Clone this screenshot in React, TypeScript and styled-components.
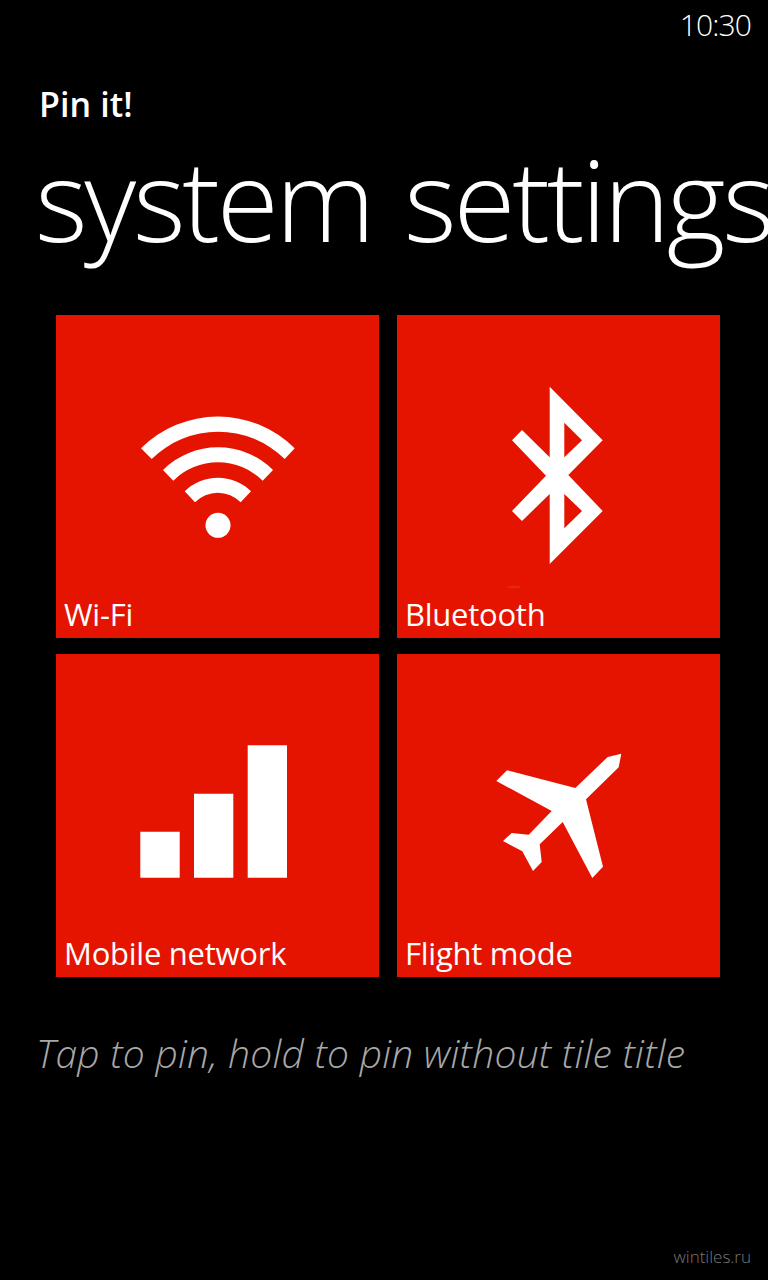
import React from "react";
import styled, { createGlobalStyle } from "styled-components";

const Global = createGlobalStyle`
  html, body { margin: 0; padding: 0; background: #000; }
  #root { width: 768px; height: 1280px; overflow: hidden; }
`;

const Page = styled.div`
  width: 768px;
  height: 1280px;
  background: #000;
  color: #fff;
  font-family: "Open Sans", "Noto Sans", sans-serif;
  display: flex;
  flex-direction: column;
  overflow: hidden;
`;

const StatusBar = styled.div`
  display: flex;
  justify-content: flex-end;
  padding: 5px 17px 0 0;
  height: 45px;
  box-sizing: border-box;
  font-size: 30px;
  line-height: 40px;
  font-weight: 300;
  letter-spacing: -0.9px;
`;

const AppName = styled.div`
  margin: 35px 0 0 39px;
  font-size: 34px;
  line-height: 48px;
  font-weight: 600;
  letter-spacing: 0.1px;
`;

const Title = styled.h1`
  margin: 10px 0 0 35px;
  font-size: 113px;
  line-height: 120px;
  font-weight: 300;
  white-space: nowrap;
  letter-spacing: -3.3px;
  word-spacing: 6px;
`;

const TileGrid = styled.div`
  display: grid;
  grid-template-columns: 323px 323px;
  grid-auto-rows: 323px;
  column-gap: 18px;
  row-gap: 16px;
  margin: 57px 0 0 56px;
`;

const Tile = styled.div`
  display: grid;
  background: #e51400;
`;

const TileIcon = styled.svg`
  grid-area: 1 / 1;
  width: 323px;
  height: 323px;
  fill: #fff;
`;

const TileLabel = styled.span<{ $inset?: number }>`
  grid-area: 1 / 1;
  align-self: end;
  padding: 0 0 3px ${(p) => p.$inset ?? 9}px;
  font-size: 31px;
  line-height: 42px;
  font-weight: 400;
  letter-spacing: -0.25px;
`;

const Hint = styled.p`
  margin: 51px 0 0 36px;
  font-size: 39px;
  line-height: 50px;
  font-weight: 300;
  font-style: italic;
  color: #a8a8a8;
  white-space: nowrap;
  letter-spacing: 0.24px;
`;

const Watermark = styled.div`
  margin-top: auto;
  align-self: flex-end;
  padding: 0 17px 11px 0;
  font-size: 17px;
  line-height: 24px;
  font-weight: 300;
  color: #787878;
`;

const WifiIcon = () => (
  <TileIcon viewBox="0 0 323 323">
    <path d="M85 133.3A108.9 108.9 0 0 1 238.7 133.3L228.7 144A94.6 94.6 0 0 0 95.7 144Z" />
    <path d="M107 155A78 78 0 0 1 217 155L206.7 165.7A63.5 63.5 0 0 0 117.3 165.7Z" />
    <path d="M128.7 176.3A47.3 47.3 0 0 1 195 176.3L184.7 187.3A32 32 0 0 0 139 187.3Z" />
    <circle cx="162" cy="210.3" r="12.5" />
  </TileIcon>
);

const BluetoothIcon = () => (
  <TileIcon viewBox="0 0 323 323">
    <path
      fillRule="evenodd"
      d="M152.7 71.7L205.7 125.3L171.3 160L205.7 196L152.7 249V179L125 206L115 196L149 160.7L115 125.3L125 115L152.7 142.3ZM167.3 107.7V142.3L185 125.3ZM167.3 179V213.3L185 196Z"
    />
    <ellipse cx="117" cy="272" rx="7" ry="1.5" opacity="0.08" />
  </TileIcon>
);

const SignalIcon = () => (
  <TileIcon viewBox="0 0 323 323">
    <path d="M84.3 177.7H123.7V223.7H84.3Z" />
    <path d="M138 139.7H177.3V223.7H138Z" />
    <path d="M191.7 91.3H231V223.7H191.7Z" />
  </TileIcon>
);

const PlaneIcon = () => (
  <TileIcon viewBox="0 0 323 323">
    <path d="M224.3 99.7L221.7 113.3L189 145.3L206 212.7L195.3 224L165.7 168L142.7 190.3L144.7 208L136 217L125.3 197.3L106 187L114.7 179L131.7 180.7L154.7 157L99.3 127L110 116.3L178.3 134L210.7 103Z" />
  </TileIcon>
);

const tiles = [
  { label: "Wi-Fi", icon: <WifiIcon /> },
  { label: "Bluetooth", icon: <BluetoothIcon /> },
  { label: "Mobile network", icon: <SignalIcon /> },
  { label: "Flight mode", icon: <PlaneIcon /> },
];

export default function App() {
  return (
    <Page>
      <Global />
      <StatusBar>10:30</StatusBar>
      <AppName>Pin it!</AppName>
      <Title>system settings</Title>
      <TileGrid>
        {tiles.map((t) => (
          <Tile key={t.label}>
            {t.icon}
            <TileLabel $inset={8}>{t.label}</TileLabel>
          </Tile>
        ))}
      </TileGrid>
      <Hint>Tap to pin, hold to pin without tile title</Hint>
      <Watermark>wintiles.ru</Watermark>
    </Page>
  );
}
